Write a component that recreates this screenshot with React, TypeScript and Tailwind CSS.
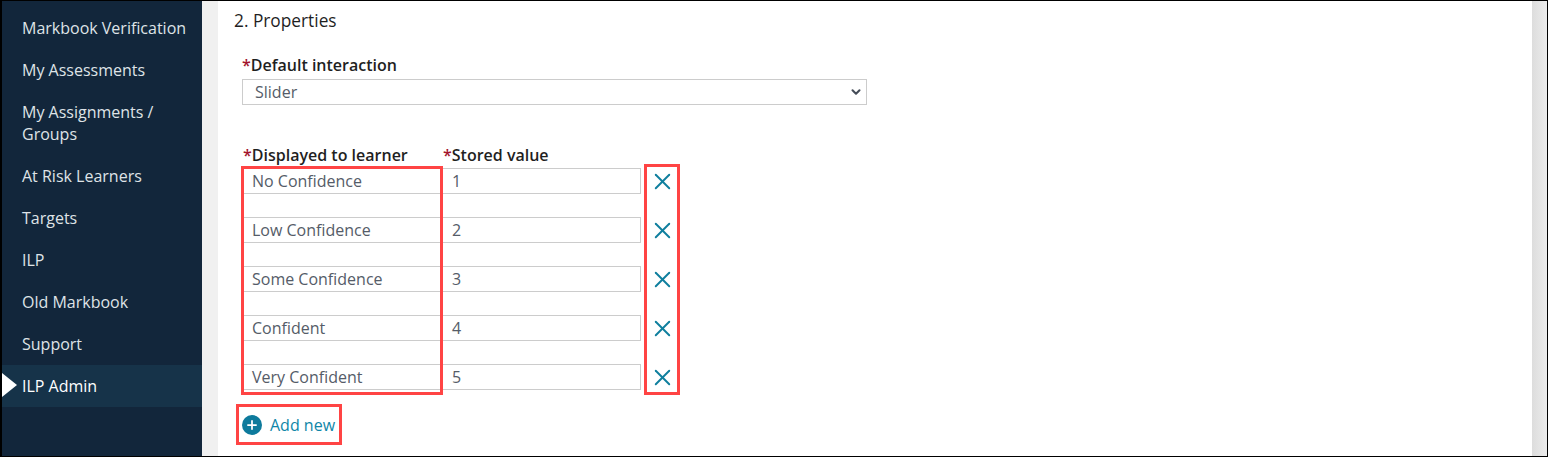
import { ChevronDown, Plus, X } from "lucide-react";

const navItems = [
  "Markbook Verification",
  "My Assessments",
  "My Assignments / Groups",
  "At Risk Learners",
  "Targets",
  "ILP",
  "Old Markbook",
  "Support",
];

const rows = [
  { label: "No Confidence", value: "1" },
  { label: "Low Confidence", value: "2" },
  { label: "Some Confidence", value: "3" },
  { label: "Confident", value: "4" },
  { label: "Very Confident", value: "5" },
];

function Required() {
  return <span className="text-[#a3142d]">*</span>;
}

export default function App() {
  return (
    <div className="flex h-[457px] w-[1548px] overflow-hidden border-t border-r border-b border-l-2 border-black bg-white font-['Open_Sans',sans-serif] text-[16px] leading-[22px]">
      {/* Sidebar */}
      <nav className="h-full w-[200px] shrink-0 bg-[#12263b] pt-[6px] text-[#dfe3e7]">
        {navItems.map((item) => (
          <div key={item} className="py-[10px] pr-[10px] pl-[20px]">
            {item}
          </div>
        ))}
        <div className="relative bg-[#163349] py-[10px] pl-[20px] text-white">
          <span className="absolute top-[8px] left-0 h-0 w-0 border-y-[12px] border-l-[15px] border-y-transparent border-l-white" />
          ILP Admin
        </div>
      </nav>

      <div className="w-[16px] shrink-0 bg-[#f0f0f0]" />

      {/* Main panel */}
      <main className="relative flex-1 pt-[9px] pl-[16px] text-[#1f1f1f]">
        <h2 className="text-[17.3px] font-medium">2. Properties</h2>

        <div className="mt-[22px] pl-[8px]">
          <label className="block leading-[22px] font-semibold">
            <Required />
            Default interaction
          </label>
          <div className="mt-[3px] flex h-[26px] w-[625px] items-center justify-between border border-[#cccccc] pr-[3px] pl-[12px] text-[#555c68]">
            <span>Slider</span>
            <ChevronDown size={14} strokeWidth={3.5} className="text-[#444b57]" />
          </div>
        </div>

        <div className="relative mt-[39px] ml-[8px]">
          <div className="flex font-semibold">
            <div className="w-[200px] pl-[1px]">
              <Required />
              Displayed to learner
            </div>
            <div className="pl-[1px]">
              <Required />
              Stored value
            </div>
          </div>

          <div className="mt-[2px] flex flex-col gap-[23px] text-[#555c68]">
            {rows.map((row) => (
              <div key={row.label} className="flex h-[26px] items-center">
                <div className="flex h-full w-[200px] items-center border border-[#cccccc] pl-[9px]">
                  {row.label}
                </div>
                <div className="flex h-full w-[199px] items-center border border-l-0 border-[#cccccc] pl-[10px]">
                  {row.value}
                </div>
                <X size={27} strokeWidth={1.7} className="ml-[8px] shrink-0 text-[#0f7f9e]" />
              </div>
            ))}
          </div>

          <div className="mt-[24px] flex items-center gap-[8px] text-[#0f86a8]">
            <span className="flex h-[20px] w-[20px] items-center justify-center rounded-full bg-[#0d7a9c]">
              <Plus size={14} strokeWidth={3} className="text-white" />
            </span>
            Add new
          </div>

          {/* Red annotation boxes */}
          <div className="absolute top-[22px] left-[-1px] h-[229px] w-[202px] border-[3px] border-[#ff4444]" />
          <div className="absolute top-[20px] left-[402px] h-[231px] w-[36px] border-[3px] border-[#ff4444]" />
          <div className="absolute top-[260px] left-[-6px] h-[41px] w-[106px] border-[3px] border-[#ff4444]" />
        </div>
      </main>

      <div className="w-[15px] shrink-0 bg-gradient-to-r from-[#dddddd] to-[#ececec]" />
    </div>
  );
}
